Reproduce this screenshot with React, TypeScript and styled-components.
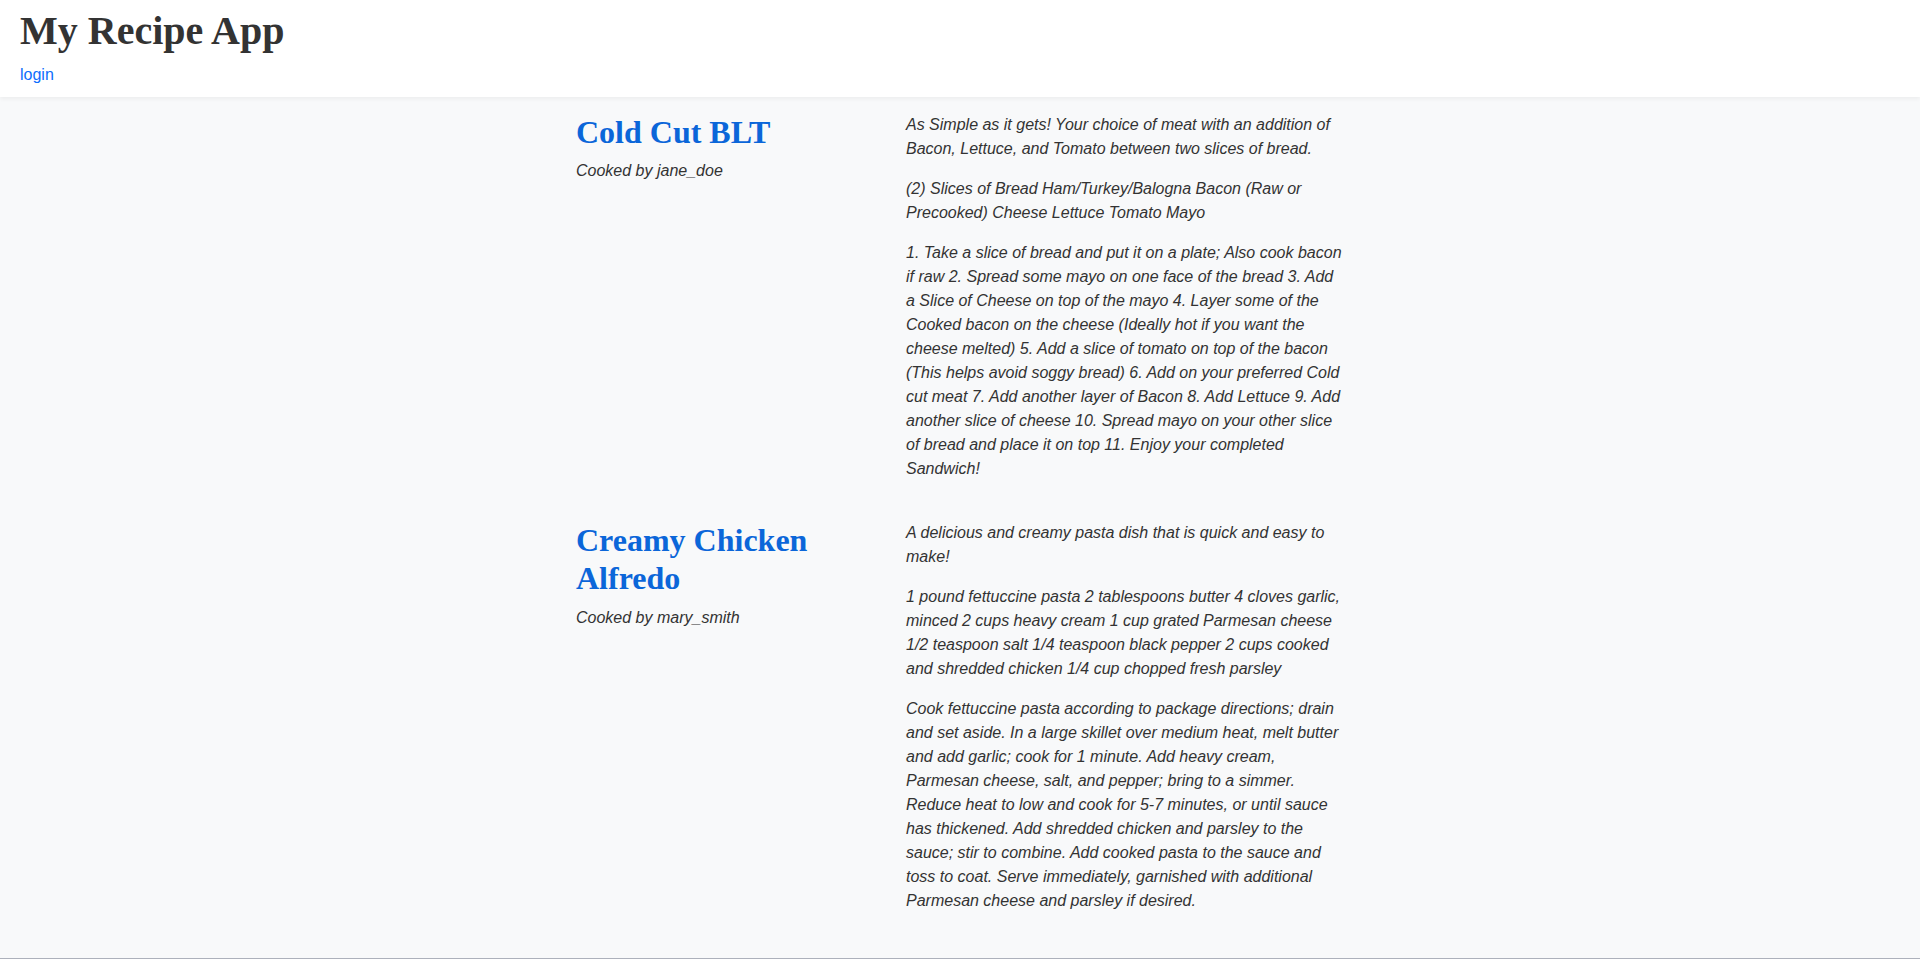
import React from "react";
import styled, { createGlobalStyle } from "styled-components";

const GlobalStyle = createGlobalStyle`
  html, body {
    margin: 0;
    padding: 0;
  }
  body {
    background: #f8f9fa;
    color: #333333;
    font-family: "Liberation Sans", Arial, sans-serif;
    font-size: 16px;
  }
`;

const Page = styled.div`
  min-height: 958px;
  display: flex;
  flex-direction: column;
  border-bottom: 1px solid #adb1bb;
`;

const Header = styled.header`
  background: #ffffff;
  padding: 7px 20px 13px;
  box-shadow: 0 2px 4px rgba(0, 0, 0, 0.05);
  position: relative;
  z-index: 1;
`;

const AppTitle = styled.h1`
  margin: 0 0 12px;
  font-family: "Liberation Serif", "Times New Roman", serif;
  font-size: 40px;
  font-weight: 700;
  line-height: normal;
  color: #333333;
`;

const NavLink = styled.a`
  font-size: 16px;
  line-height: normal;
  color: #0d6efd;
  text-decoration: none;
`;

const Main = styled.main`
  flex: 1;
  width: 768px;
  margin: 0 auto;
  padding: 0 0 24px;
  display: flex;
  flex-direction: column;
  gap: 8px;
`;

const Recipe = styled.article`
  display: grid;
  grid-template-columns: 300px 1fr;
  column-gap: 30px;
`;

const Side = styled.div`
  padding-top: 16px;
`;

const RecipeTitle = styled.h2`
  margin: 0 0 8px;
  font-family: "Liberation Serif", "Times New Roman", serif;
  font-size: 32px;
  font-weight: 700;
  line-height: 1.2;
  color: #0b66d9;
`;

const Author = styled.p`
  margin: 0;
  font-style: italic;
  line-height: 24px;
  color: #333333;
`;

const Body = styled.div``;

const Para = styled.p`
  margin: 16px 0;
  font-style: italic;
  line-height: 24px;
  color: #333333;
`;

type RecipeData = {
  title: string;
  author: string;
  description: string;
  ingredients: string;
  instructions: string;
};

const recipes: RecipeData[] = [
  {
    title: "Cold Cut BLT",
    author: "jane_doe",
    description:
      "As Simple as it gets! Your choice of meat with an addition of Bacon, Lettuce, and Tomato between two slices of bread.",
    ingredients:
      "(2) Slices of Bread Ham/Turkey/Balogna Bacon (Raw or Precooked) Cheese Lettuce Tomato Mayo",
    instructions:
      "1. Take a slice of bread and put it on a plate; Also cook bacon if raw 2. Spread some mayo on one face of the bread 3. Add a Slice of Cheese on top of the mayo 4. Layer some of the Cooked bacon on the cheese (Ideally hot if you want the cheese melted) 5. Add a slice of tomato on top of the bacon (This helps avoid soggy bread) 6. Add on your preferred Cold cut meat 7. Add another layer of Bacon 8. Add Lettuce 9. Add another slice of cheese 10. Spread mayo on your other slice of bread and place it on top 11. Enjoy your completed Sandwich!",
  },
  {
    title: "Creamy Chicken Alfredo",
    author: "mary_smith",
    description:
      "A delicious and creamy pasta dish that is quick and easy to make!",
    ingredients:
      "1 pound fettuccine pasta 2 tablespoons butter 4 cloves garlic, minced 2 cups heavy cream 1 cup grated Parmesan cheese 1/2 teaspoon salt 1/4 teaspoon black pepper 2 cups cooked and shredded chicken 1/4 cup chopped fresh parsley",
    instructions:
      "Cook fettuccine pasta according to package directions; drain and set aside. In a large skillet over medium heat, melt butter and add garlic; cook for 1 minute. Add heavy cream, Parmesan cheese, salt, and pepper; bring to a simmer. Reduce heat to low and cook for 5-7 minutes, or until sauce has thickened. Add shredded chicken and parsley to the sauce; stir to combine. Add cooked pasta to the sauce and toss to coat. Serve immediately, garnished with additional Parmesan cheese and parsley if desired.",
  },
];

export default function App() {
  return (
    <Page>
      <GlobalStyle />
      <Header>
        <AppTitle>My Recipe App</AppTitle>
        <NavLink href="#">login</NavLink>
      </Header>
      <Main>
        {recipes.map((r) => (
          <Recipe key={r.title}>
            <Side>
              <RecipeTitle>{r.title}</RecipeTitle>
              <Author>Cooked by {r.author}</Author>
            </Side>
            <Body>
              <Para>{r.description}</Para>
              <Para>{r.ingredients}</Para>
              <Para>{r.instructions}</Para>
            </Body>
          </Recipe>
        ))}
      </Main>
    </Page>
  );
}
